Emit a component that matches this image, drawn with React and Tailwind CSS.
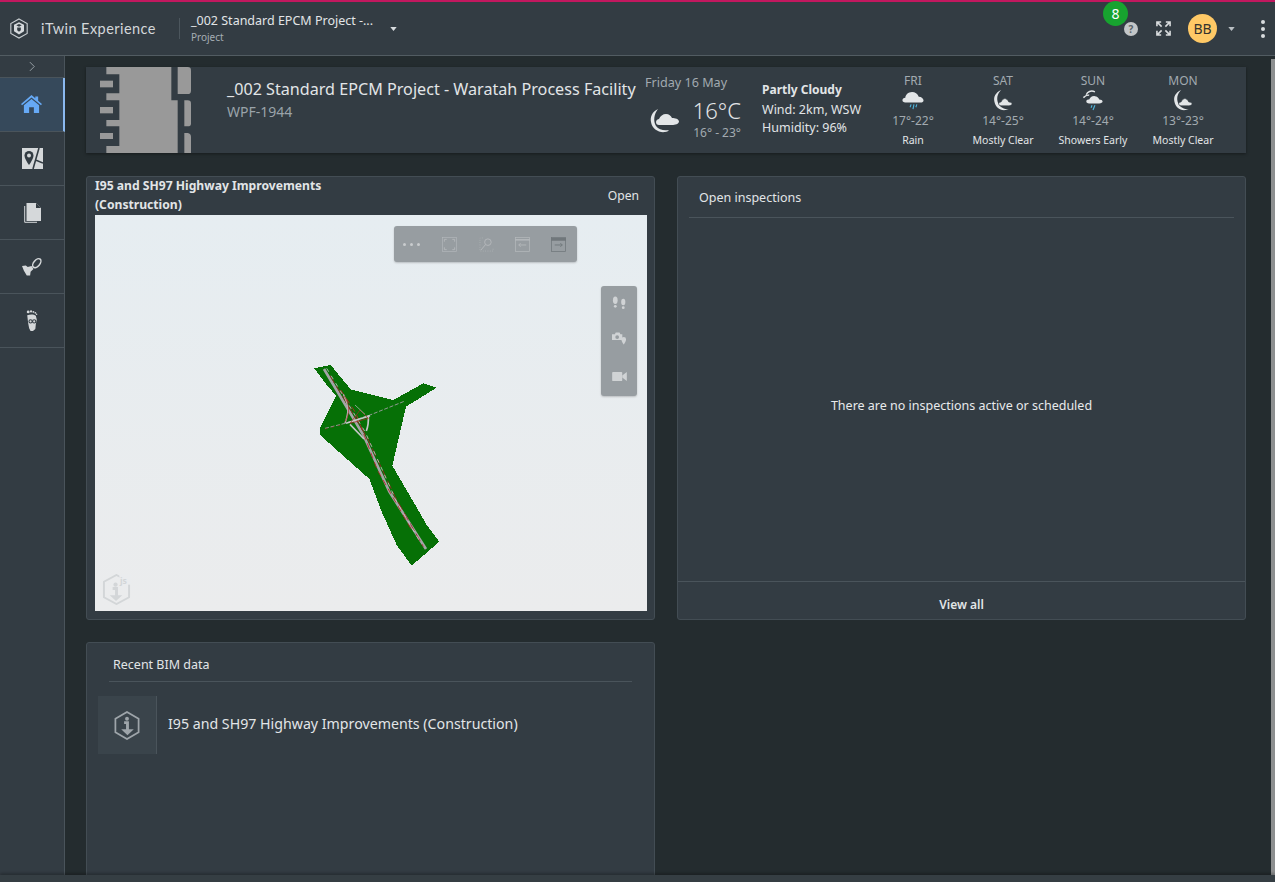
import React from 'react';

const forecast = [
  { day: 'FRI', temp: '17°-22°', desc: 'Rain', icon: 'rain' },
  { day: 'SAT', temp: '14°-25°', desc: 'Mostly Clear', icon: 'moon' },
  { day: 'SUN', temp: '14°-24°', desc: 'Showers Early', icon: 'showers' },
  { day: 'MON', temp: '13°-23°', desc: 'Mostly Clear', icon: 'moon' },
];

const Caret = ({ className }) => (
  <svg viewBox="0 0 8 5" className={className}><path d="M0 0h8L4 5z" fill="currentColor" /></svg>
);

const Logo = () => (
  <svg viewBox="0 0 22 24" className="w-5 h-[23px]">
    <path d="M11 1.500 20 6.500V17.500L11 22.500 2 17.500V6.500z" fill="none" stroke="#c9ced2" strokeWidth="1.200" />
    <path d="M11 5 16.500 8V15L11 18.500 5.500 15V8z" fill="#d6dadd" />
    <path d="M8 8.500 11 7 14 8.500 11 10z" fill="#333c43" />
    <path d="M9 11H13V14L11 15.500 9 14z" fill="#333c43" />
  </svg>
);

const MoonCloud = ({ className }) => (
  <svg viewBox="0 0 29 25" className={className} fill="#e3e6e8">
    <path d="M8 1C2 4 0 9 1 14c1 7 8 11 14 10 2 0 3-1 4-2-5 1-10 0-13-4C3 13 4 6 8 1z" />
    <path d="M9 17c-2 0-3-1-3-3s2-3 3-3c1-3 4-5 7-5 3 0 5 2 6 4 3 0 7 1 7 3.500S25 17 22 17z" />
  </svg>
);

const WeatherIcon = ({ type }) => {
  if (type === 'moon') {
    return (
      <svg viewBox="0 0 20 24" className="w-[20px] h-[23px]" fill="#e3e6e8">
        <path d="M8 1C2 4 0 8 1 13c1 6 6 10 12 9l3-1c-5 0-9-2-11-6C3 10 4 5 8 1z" />
        <path d="M8 17.500c-1.500 0-2.500-1-2.500-2s1-2 2.500-2c1-2 2.500-3.500 4-3.500s3 1.500 4 3.500c2 0 3.500 1 3.500 2s-1.500 2-3.500 2z" stroke="#333c43" strokeWidth=".6" />
      </svg>
    );
  }
  if (type === 'showers') {
    return (
      <svg viewBox="0 0 22 24" className="w-[22px] h-[23px]">
        <path d="M4 6c1-3 5-5 9-3" fill="none" stroke="#e3e6e8" strokeWidth="1.500" />
        <path d="M1 9c2-2 4-3 6-2.500" fill="none" stroke="#e3e6e8" strokeWidth="1.500" />
        <path d="M7 15c-2 0-3-1-3-2 0-2 2-2 3-2 1-2 3-4 6-3.500 2 0 4 1.500 4.500 3.500 2 0 3.500 1 3.500 2s-1.500 2-3.500 2z" fill="#e3e6e8" />
        <path d="M10 17l-1 2.500M13 17l-2 5" stroke="#4fb3d9" strokeWidth="1.200" fill="none" />
      </svg>
    );
  }
  return (
    <svg viewBox="0 0 22 24" className="w-[22px] h-[23px]">
      <path d="M3 14c-2 0-3-1-3-2 0-2 1-3 3-3 0-3 3-6 7-6 3 0 6 2 7 5 3 0 5 2 5 4 0 1-1 2-2 2z" fill="#e3e6e8" />
      <path d="M9 16l-1 3M12 16l-1 5M15 16l-1 3" stroke="#4fb3d9" strokeWidth="1.200" fill="none" />
    </svg>
  );
};

const navIcons = [
  <svg key="home" viewBox="0 0 22 20" className="w-[21px] h-[19px]" fill="#66a9f5">
    <path d="M11 0 15 3.400V1.500H18V6L22 9.500 21 10.800 11 2.500 1 10.800 0 9.500z" />
    <path d="M11 4.200 19 10.800V19H13.500V13H8.500V19H3V10.800z" />
  </svg>,
  <svg key="map" viewBox="0 0 21 21" className="w-[21px] h-[21px]">
    <rect width="21" height="21" fill="#d5d8da" />
    <path d="M7 3a4.500 4.500 0 0 1 4.500 4.500C11.500 11 7 17 7 17S2.500 11 2.500 7.500A4.500 4.500 0 0 1 7 3z" fill="#333c43" />
    <circle cx="7" cy="7.500" r="2" fill="#d5d8da" />
    <path d="M17 0 11 21M13.500 12 21 15" stroke="#333c43" strokeWidth="1.600" fill="none" />
  </svg>,
  <svg key="docs" viewBox="0 0 17 20" className="w-[17px] h-[20px]">
    <path d="M.700 3V19.300H13" fill="none" stroke="#d5d8da" strokeWidth="1" />
    <path d="M2.500 0H12L17 5V18H2.500z" fill="#d5d8da" />
    <path d="M12 0V5H17z" fill="#333c43" />
  </svg>,
  <svg key="bell" viewBox="0 0 22 20" className="w-[21px] h-[20px]">
    <ellipse cx="15.500" cy="6" rx="3.200" ry="5.500" transform="rotate(40 15.500 6)" fill="none" stroke="#d5d8da" strokeWidth="1.600" />
    <path d="M0 9 4 8.500 6 10 10 9 12 12 9 15 8.500 19 5 19 2 14z" fill="#d5d8da" />
  </svg>,
  <svg key="foot" viewBox="0 0 12 22" className="w-[12px] h-[21px]" fill="#d5d8da">
    <path d="M1 5.500C4 4.500 8 4.500 10 6l1 4-1 5-.500 5-2.500 2H4.500L3 19 2 14z" />
    <circle cx="2" cy="2" r="1.500" /><circle cx="5" cy="1.500" r="1.200" /><circle cx="7.500" cy="2" r="1" /><circle cx="9.500" cy="3" r=".9" /><circle cx="10.800" cy="4.500" r=".8" />
    <circle cx="4.500" cy="12" r="1.700" fill="none" stroke="#333c43" strokeWidth="1.100" />
    <circle cx="8.300" cy="12" r="1.700" fill="none" stroke="#333c43" strokeWidth="1.100" />
  </svg>,
];

const Sidebar = () => (
  <aside className="w-[65px] shrink-0 bg-[#333c43] border-r border-[#4a545b] flex flex-col">
    <div className="h-[22px] flex items-center justify-center border-b border-[#4a545b]">
      <svg viewBox="0 0 8 12" className="w-[7px] h-[11px]"><path d="M1 1l5 5-5 5" fill="none" stroke="#9aa3a9" strokeWidth="1.100" /></svg>
    </div>
    {navIcons.map((icon, i) => (
      <div
        key={i}
        className={`h-[54px] flex items-center justify-center border-b border-[#4a545b] ${
          i === 0 ? 'bg-[#36495b] border-r-2 border-r-[#8ab8ef] -mr-px' : ''
        }`}
      >
        {icon}
      </div>
    ))}
  </aside>
);

const Header = () => (
  <header className="h-[54px] shrink-0 bg-[#333c43] border-b border-[#525c62] flex items-center">
    <div className="w-[179px] flex items-center pl-[9px]">
      <Logo />
      <span className="ml-[12px] text-[14.500px] text-[#d3d7da] font-['Lato',sans-serif] tracking-[0.45px]">iTwin Experience</span>
    </div>
    <div className="h-[21px] w-px bg-[#4c565d]" />
    <div className="ml-[11px] w-[199px]">
      <div className="text-[12.500px] text-[#e2e5e7] leading-[16px] whitespace-nowrap">_002 Standard EPCM Project -...</div>
      <div className="text-[10px] text-[#a5adb3] leading-[16px]">Project</div>
    </div>
    <Caret className="w-[7px] h-[4px] text-[#d8dcdf]" />
    <div className="ml-auto flex items-center relative">
      <span className="absolute left-[-21px] top-[-13px] w-[25px] h-[25px] rounded-full bg-[#17a32f] text-white text-[14px] flex items-center justify-center">8</span>
      <svg viewBox="0 0 14 14" className="w-[14px] h-[14px]">
        <circle cx="7" cy="7" r="7" fill="#c3c6c8" />
        <text x="7" y="10.500" textAnchor="middle" fontSize="10" fontWeight="700" fill="#5b6367">?</text>
      </svg>
      <svg viewBox="0 0 16 16" className="ml-[18px] w-[15px] h-[15px]" fill="none" stroke="#d9dcde" strokeWidth="1.700">
        <path d="M1 5.500V1H5.500M1 1l5 5M15 5.500V1H10.500M15 1l-5 5M1 10.500V15H5.500M1 15l5-5M15 10.500V15H10.500M15 15l-5-5" />
      </svg>
      <div className="ml-[17px] w-[29px] h-[29px] rounded-full bg-[#ffc966] text-[#33332e] text-[14px] flex items-center justify-center">BB</div>
      <Caret className="ml-[11px] w-[7px] h-[4px] text-[#b9bfc3]" />
      <div className="ml-[26px] mr-[10px] flex flex-col gap-[3px]">
        <span className="w-[4px] h-[4px] rounded-full bg-[#d9dcde]" />
        <span className="w-[4px] h-[4px] rounded-full bg-[#d9dcde]" />
        <span className="w-[4px] h-[4px] rounded-full bg-[#d9dcde]" />
      </div>
    </div>
  </header>
);

const Banner = () => (
  <section className="h-[86px] shrink-0 bg-[#333c43] shadow-[0_1px_3px_rgba(0,0,0,0.4)] flex">
    <svg viewBox="0 6 390 258" className="w-[130px] h-[86px] shrink-0" fill="#999999">
      <path d="M61 6H256V106H275V264H61V243H100V184H61V165H100V106H61V85H100V28H61z" />
      <rect x="42" y="47" width="39" height="20" />
      <rect x="42" y="126" width="39" height="19" />
      <rect x="42" y="204" width="39" height="18" />
      <path d="M275 6H305Q315 6 315 16V77Q315 87 305 87H275z" />
      <path d="M295 106H305Q315 106 315 116V176Q315 184 305 184H295z" />
      <path d="M295 204H305Q315 206 315 216V264H295z" />
    </svg>
    <div className="w-[429px] shrink-0 pl-[11px] pt-[11px]">
      <div className="text-[16.150px] leading-[22px] text-[#e2e5e7] whitespace-nowrap">_002 Standard EPCM Project - Waratah Process Facility</div>
      <div className="text-[14px] leading-[24px] text-[#9aa3a9]">WPF-1944</div>
    </div>
    <div className="w-[117px] shrink-0 pt-[7px]">
      <div className="text-[12.600px] leading-[18px] text-[#a2aab0]">Friday 16 May</div>
      <div className="flex mt-[3px] w-[96px] justify-between">
        <MoonCloud className="ml-[5px] mt-[13px] w-[29px] h-[25px]" />
        <div className="text-right">
          <div className="text-[22px] leading-[30px] font-light text-[#e2e5e7]">16°C</div>
          <div className="text-[12px] leading-[16px] text-[#a2aab0] whitespace-nowrap">16° - 23°</div>
        </div>
      </div>
    </div>
    <div className="w-[106px] shrink-0 pt-[14px] text-[12.500px] leading-[18.500px] text-[#e2e5e7]">
      <div className="font-bold text-[12px]">Partly Cloudy</div>
      <div className="mt-[1px]">Wind: 2km, WSW</div>
      <div>Humidity: 96%</div>
    </div>
    <div className="flex">
      {forecast.map((f) => (
        <div key={f.day} className="w-[90px] flex flex-col items-center pt-[5px]">
          <div className="text-[12px] leading-[17px] text-[#a2aab0]">{f.day}</div>
          <WeatherIcon type={f.icon} />
          <div className="text-[12px] leading-[18px] text-[#a2aab0]">{f.temp}</div>
          <div className="text-[10.500px] leading-[20px] text-[#e2e5e7] whitespace-nowrap">{f.desc}</div>
        </div>
      ))}
    </div>
  </section>
);

const TopToolbar = () => (
  <div className="absolute left-[299px] top-[11px] w-[183px] h-[36px] rounded-[3px] bg-[#979da1] shadow-[0_1px_2px_rgba(0,0,0,0.2)] flex items-center justify-between pl-[9px] pr-[11px]">
    <div className="flex gap-[4px] w-[18px] shrink-0">
      <span className="w-[3px] h-[3px] rounded-full bg-[#c9ccce]" />
      <span className="w-[3px] h-[3px] rounded-full bg-[#c9ccce]" />
      <span className="w-[3px] h-[3px] rounded-full bg-[#c9ccce]" />
    </div>
    <svg viewBox="0 0 16 16" className="w-[15px] h-[15px]" fill="none" stroke="#b4b8bb">
      <rect x=".5" y=".5" width="15" height="15" strokeWidth=".7" />
      <path d="M2.500 5V2.500H5M11 2.500H13.500V5M2.500 11V13.500H5M11 13.500H13.500V11" />
    </svg>
    <svg viewBox="0 0 16 16" className="w-[15px] h-[15px]" fill="none" stroke="#b4b8bb">
      <circle cx="9.500" cy="5.500" r="3.500" />
      <path d="M7 8 2 14" />
      <path d="M4 1H1V15H15V12" strokeDasharray="1 1.500" strokeWidth=".7" />
    </svg>
    <svg viewBox="0 0 16 16" className="w-[15px] h-[15px]" fill="none" stroke="#b4b8bb">
      <rect x=".5" y=".5" width="15" height="15" strokeWidth=".8" />
      <path d="M0 3H16" strokeWidth="1.600" />
      <path d="M12 8.500H4M6 6.500 4 8.500 6 10.500" />
    </svg>
    <svg viewBox="0 0 16 16" className="w-[15px] h-[15px]" fill="none" stroke="#70777b">
      <rect x=".5" y=".5" width="15" height="15" strokeWidth=".8" />
      <path d="M0 2.500H16" strokeWidth="3" />
      <path d="M4 8.500H12M10 6.500 12 8.500 10 10.500" />
    </svg>
  </div>
);

const SideToolbar = () => (
  <div className="absolute left-[506px] top-[71px] w-[36px] h-[110px] rounded-[3px] bg-[#979da1] shadow-[0_1px_2px_rgba(0,0,0,0.2)] flex flex-col items-center pt-[10px]">
    <svg viewBox="0 0 16 14" className="w-[15px] h-[14px]" fill="#d0d3d5">
      <ellipse cx="3.500" cy="4" rx="2.500" ry="4" /><circle cx="3.500" cy="10.500" r="1.500" />
      <ellipse cx="12" cy="6" rx="2.200" ry="3.500" /><circle cx="12" cy="12" r="1.500" />
    </svg>
    <svg viewBox="0 0 16 14" className="mt-[21px] w-[15px] h-[14px]" fill="#d0d3d5">
      <path d="M0 3H3L4 1H8L9 3H11V9H0z" />
      <circle cx="5.500" cy="6" r="2" fill="#979da1" />
      <path d="M12.500 6a2.500 2.500 0 0 1 2.500 2.500C15 10.500 12.500 14 12.500 14S10 10.500 10 8.500A2.500 2.500 0 0 1 12.500 6z" />
    </svg>
    <svg viewBox="0 0 16 12" className="mt-[26px] w-[15px] h-[11px]" fill="#d0d3d5">
      <rect x="0" y="1" width="11" height="10" rx="1" />
      <path d="M11 5 16 1V11L11 7z" />
    </svg>
  </div>
);

const RoadModel = () => (
  <svg viewBox="0 0 450 645" className="absolute left-[205px] top-[140px] w-[150px] h-[215px]">
    <path
      d="M43 40 92 30 152 103 280 135 370 85 410 98 318 155 277 332 340 440 380 510 418 560 335 632 290 570 245 470 208 372 60 240 60 218 108 122 82 92z"
      fill="#067006"
      shapeRendering="crispEdges"
    />
    <g fill="none">
      <path d="M72 42 190 240 268 410 378 582" stroke="#a4a4a7" strokeWidth="8" />
      <path d="M90 62 200 245 285 425 370 575" stroke="#a62228" strokeWidth="2.500" strokeDasharray="26 10" />
      <path d="M122 105 168 175 232 345 335 525" stroke="#bd2228" strokeWidth="2.500" strokeDasharray="18 12" />
      <path d="M80 40 195 230 290 440 360 560" stroke="#c5c5c8" strokeWidth="2.500" strokeDasharray="12 14" />
      <path d="M75 220 135 205 210 180 315 138" stroke="#8f9a92" strokeWidth="3" strokeDasharray="12 5" />
      <path d="M75 222 135 207" stroke="#a62228" strokeWidth="1.500" strokeDasharray="8 12" />
      <path d="M135 205C147 170 147 150 130 118" stroke="#b9b9bb" strokeWidth="4" />
      <path d="M132 122C150 150 150 175 135 200" stroke="#b3262b" strokeWidth="2" />
      <path d="M138 205 210 182" stroke="#c9c9cb" strokeWidth="4.500" />
      <path d="M150 208 192 252M205 180C206 200 204 215 199 228" stroke="#c5c5c7" strokeWidth="5" />
      <path d="M180 165 150 205 205 190z" stroke="#b3262b" strokeWidth="2" />
      <path d="M165 150 195 178" stroke="#c5c5c7" strokeWidth="2" />
    </g>
  </svg>
);

const Viewer = () => (
  <div className="relative h-[396px] bg-linear-to-b from-[#e6edf1] to-[#ebeced] overflow-hidden">
    <TopToolbar />
    <SideToolbar />
    <RoadModel />
    <svg viewBox="0 0 30 32" className="absolute left-[7px] bottom-[6px] w-[29px] h-[31px]" fill="none" stroke="#d3d6d8">
      <path d="M15 1 28 8V24L15 31 2 24V8z" strokeWidth="2" />
      <rect x="18" y="0" width="12" height="11" fill="#eaecee" stroke="none" />
      <circle cx="14" cy="11" r="2.200" fill="#d3d6d8" stroke="none" />
      <path d="M11 15H15V24" strokeWidth="3" />
      <path d="M8 22 14.500 28 21 22z" fill="#d3d6d8" stroke="none" />
      <text x="18.500" y="10" fontSize="9" fontWeight="700" fill="#d3d6d8" stroke="none">js</text>
    </svg>
  </div>
);

const cardClass = 'bg-[#333c43] border border-[#434d54] rounded-[3px]';

const ViewerCard = () => (
  <div className={`${cardClass} h-[444px] pl-[8px] pr-[7px]`}>
    <div className="h-[38px] flex justify-between text-[12.150px] leading-[18.500px] text-[#e2e5e7]">
      <div className="w-[260px] font-bold">I95 and SH97 Highway Improvements (Construction)</div>
      <div className="pt-[10px] pr-[8px]">Open</div>
    </div>
    <Viewer />
  </div>
);

const InspectionsCard = () => (
  <div className={`${cardClass} h-[444px] flex flex-col`}>
    <div className="mx-[11px] h-[41px] border-b border-[#4a545b] pl-[10px] pt-[2px] flex items-center text-[12.500px] text-[#e2e5e7]">Open inspections</div>
    <div className="flex-1 pt-[14px] flex items-center justify-center text-[12.500px] text-[#e8eaec]">There are no inspections active or scheduled</div>
    <div className="h-[38px] border-t border-[#4a545b] pt-[8px] flex items-center justify-center text-[12px] font-semibold text-[#e2e5e7]">View all</div>
  </div>
);

const BimCard = () => (
  <div className={`${cardClass} h-[260px]`}>
    <div className="mx-[22px] h-[39px] border-b border-[#4a545b] pl-[4px] pt-[7px] flex items-center text-[12.500px] text-[#e2e5e7]">Recent BIM data</div>
    <div className="mt-[14px] ml-[11px] flex items-center">
      <div className="w-[59px] h-[58px] bg-[#3a444b] border-r border-[#4a545b] flex items-center justify-center">
        <svg viewBox="0 0 26 30" className="w-[26px] h-[29px]" fill="none" stroke="#9ea5aa">
          <path d="M13 1 25 8V22L13 29 1 22V8z" strokeWidth="1.800" />
          <circle cx="13" cy="8" r="2" fill="#9ea5aa" stroke="none" />
          <path d="M10 12H13.500V21" strokeWidth="3" />
          <path d="M7 19 13.500 25 20 19z" fill="#9ea5aa" stroke="none" />
        </svg>
      </div>
      <div className="ml-[11px] pb-[2px] text-[14.200px] text-[#e2e5e7]">I95 and SH97 Highway Improvements (Construction)</div>
    </div>
  </div>
);

export default function App() {
  return (
    <div className="w-[1275px] h-[882px] overflow-hidden flex flex-col bg-[#242c2f] font-['Noto_Sans',sans-serif]">
      <div className="h-[2px] shrink-0 bg-[#c2185f]" />
      <Header />
      <div className="flex flex-1 min-h-0">
        <Sidebar />
        <main className="flex-1 min-w-0 pl-[21px] pr-[25px] pt-[11px] flex flex-col gap-[23px]">
          <Banner />
          <div className="grid grid-cols-2 gap-x-[22px] gap-y-[22px]">
            <ViewerCard />
            <InspectionsCard />
            <BimCard />
          </div>
        </main>
        <div className="w-[4px] shrink-0 mt-[3px] bg-[#8d8f90]" />
      </div>
      <div className="h-[7px] shrink-0 bg-[#353e43] shadow-[0_-2px_3px_rgba(0,0,0,0.25)] z-10" />
    </div>
  );
}
